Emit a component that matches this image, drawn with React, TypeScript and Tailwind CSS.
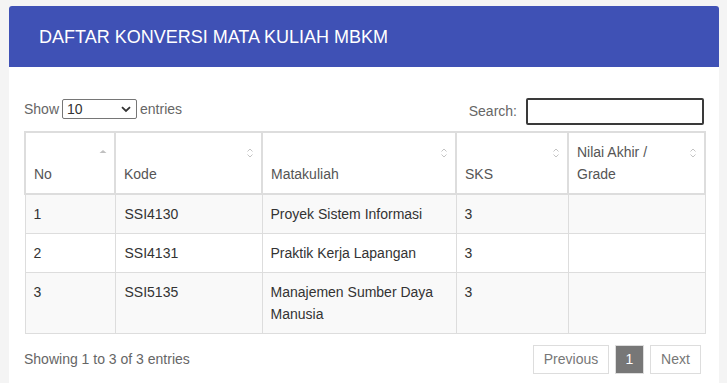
import { useState } from 'react'

const rows = [
  { no: 1, kode: 'SSI4130', nama: 'Proyek Sistem Informasi', sks: 3, nilai: '' },
  { no: 2, kode: 'SSI4131', nama: 'Praktik Kerja Lapangan', sks: 3, nilai: '' },
  { no: 3, kode: 'SSI5135', nama: 'Manajemen Sumber Daya Manusia', sks: 3, nilai: '' },
]

function SortIcon({ asc }: { asc?: boolean }) {
  if (asc) {
    return (
      <svg width="8" height="12" viewBox="0 0 8 12" className="absolute right-[7px] top-[15px]">
        <path d="M0.5 5 L4 2 L7.5 5 Z" fill="#c0c0c0" />
      </svg>
    )
  }
  return (
    <svg width="8" height="12" viewBox="0 0 8 12" className="absolute right-[7px] top-[14px]">
      <path d="M1.5 4.5 L4 2 L6.5 4.5" fill="none" stroke="#c4c4c4" strokeWidth="1" />
      <path d="M1.5 7.5 L4 10 L6.5 7.5" fill="none" stroke="#c4c4c4" strokeWidth="1" />
    </svg>
  )
}

export default function App() {
  const [show, setShow] = useState('10')
  const [q, setQ] = useState('')

  return (
    <div className="min-h-screen bg-[#f4f4f4] pl-[9px] pr-[8px] pt-[6px] font-['Liberation_Sans',Arial,sans-serif] text-[14px] text-[#333]">
      <div className="bg-white rounded-t-[3px] overflow-hidden pb-[20px]">
        <div className="bg-[#3f51b5] h-[61px] px-[30px] flex items-center">
          <h1 className="text-white text-[18px] leading-none">DAFTAR KONVERSI MATA KULIAH MBKM</h1>
        </div>

        <div className="px-[15px] pt-[31px]">
          <div className="flex justify-between items-start">
            <label className="flex items-center gap-[3px] text-[#666] mt-[1px]">
              Show
              <span className="relative">
                <select
                  value={show}
                  onChange={(e) => setShow(e.target.value)}
                  className="appearance-none w-[75px] h-[20px] border border-[#767676] rounded-[2px] bg-white pl-[4px] text-[14px] leading-[18px] text-[#333] outline-none"
                >
                  <option>10</option>
                  <option>25</option>
                  <option>50</option>
                  <option>100</option>
                </select>
                <svg width="10" height="7" viewBox="0 0 10 7" className="absolute right-[6px] top-[7px] pointer-events-none">
                  <path d="M1 1.2 L5 5 L9 1.2" fill="none" stroke="#333" strokeWidth="1.8" />
                </svg>
              </span>
              entries
            </label>
            <label className="flex items-center gap-[9px] text-[#666]">
              Search:
              <input
                value={q}
                onChange={(e) => setQ(e.target.value)}
                className="w-[178px] h-[27px] border-2 border-[#3a3a3a] rounded-[2px] outline-none px-[4px]"
              />
            </label>
          </div>

          <table className="mt-[6px] w-[680px] table-fixed border-collapse">
            <colgroup>
              <col className="w-[90px]" />
              <col className="w-[147px]" />
              <col className="w-[194px]" />
              <col className="w-[112px]" />
              <col className="w-[137px]" />
            </colgroup>
            <thead>
              <tr>
                {['No', 'Kode', 'Matakuliah', 'SKS', 'Nilai Akhir / Grade'].map((h, i) => (
                  <th
                    key={h}
                    className="relative border-2 border-[#ddd] align-bottom text-left font-normal text-[#555] leading-[22px] pt-[8px] pb-[8px] pl-[8px] pr-[30px]"
                  >
                    {h}
                    <SortIcon asc={i === 0} />
                  </th>
                ))}
              </tr>
            </thead>
            <tbody>
              {rows.map((r, i) => (
                <tr key={r.no} className={i % 2 === 0 ? 'bg-[#f9f9f9]' : 'bg-white'}>
                  <td className="border border-[#ddd] align-top leading-[22px] py-[8px] pl-[8px] pr-[10px]">{r.no}</td>
                  <td className="border border-[#ddd] align-top leading-[22px] py-[8px] pl-[9px] pr-[10px]">{r.kode}</td>
                  <td className="border border-[#ddd] align-top leading-[22px] py-[8px] pl-[8px] pr-[10px]">{r.nama}</td>
                  <td className="border border-[#ddd] align-top leading-[22px] py-[8px] pl-[8px] pr-[10px]">{r.sks}</td>
                  <td className="border border-[#ddd] align-top leading-[22px] py-[8px] pl-[8px] pr-[10px]">{r.nilai}</td>
                </tr>
              ))}
            </tbody>
          </table>

          <div className="flex justify-between items-center pt-[11px] pr-[3px]">
            <div className="text-[#666]">Showing 1 to 3 of 3 entries</div>
            <div className="flex gap-[6px]">
              <button className="h-[29px] w-[76px] border border-[#ddd] text-[#777] bg-white">Previous</button>
              <button className="h-[29px] w-[29px] border border-[#ddd] text-white bg-[#777]">1</button>
              <button className="h-[29px] w-[51px] border border-[#ddd] text-[#777] bg-white">Next</button>
            </div>
          </div>
        </div>
      </div>
    </div>
  )
}
